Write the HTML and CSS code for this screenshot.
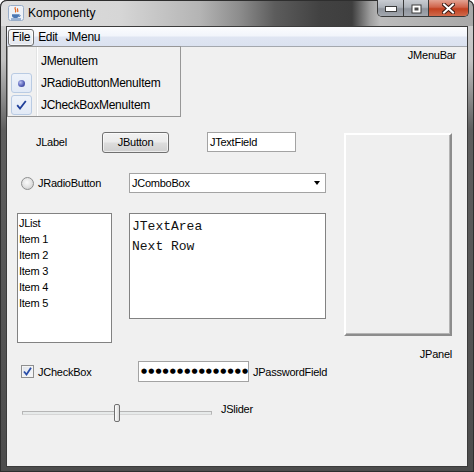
FILE: index.html
```html
<!DOCTYPE html>
<html>
<head>
<meta charset="utf-8">
<link rel="stylesheet" href="styles.css">
</head>
<body>
<div class="window">
  <div class="titlebar">
    <svg class="app-icon" width="16" height="16" viewBox="0 0 16 16">
      <rect x="0.5" y="0.5" width="15" height="15" rx="2" fill="#eef2f8" stroke="#9aaec8"/>
      <path d="M7.5 2.2c-2 1.8 1.8 2.6 -0.2 5.2M9.8 3.4c-1.2 1.2 1 1.8 -0.3 3.6" stroke="#e2641c" stroke-width="1.2" fill="none"/>
      <path d="M4 9.2h7v1.2c0 1.8-1.6 2.6-3.5 2.6S4 12.2 4 10.4z" fill="#4b77b4"/>
      <path d="M11 9.8c1.6 0 1.6 1.8 0 1.8" stroke="#4b77b4" fill="none"/>
      <path d="M3 14h10" stroke="#4b77b4" stroke-width="1"/>
    </svg>
    <span class="title">Komponenty</span>
    <div class="controls">
      <div class="ctl min">
        <svg width="12" height="6" viewBox="0 0 12 6"><rect x="0.5" y="0.5" width="11" height="5" fill="#fff" stroke="#3c3c3c"/></svg>
      </div>
      <div class="ctl max">
        <svg width="11" height="10" viewBox="0 0 11 10"><rect x="0.5" y="0.5" width="10" height="9" fill="#3c3c3c"/><rect x="1.5" y="1.5" width="8" height="7" fill="#fff"/><rect x="3.5" y="3.5" width="4" height="3" fill="#4a4a4a"/></svg>
      </div>
      <div class="ctl close">
        <svg width="13" height="11" viewBox="0 0 13 11"><path d="M2 1.5l9 8M11 1.5l-9 8" stroke="#3a1a14" stroke-width="4" stroke-linecap="square"/><path d="M2 1.5l9 8M11 1.5l-9 8" stroke="#fff" stroke-width="2" stroke-linecap="square"/></svg>
      </div>
    </div>
  </div>
  <div class="client">
    <div class="menubar">
      <span class="menu active">File</span>
      <span class="menu">Edit</span>
      <span class="menu">JMenu</span>
    </div>
    <div class="main">
      <div class="caption caption-bar">JMenuBar</div>
      <div class="upper">
        <div class="left">
          <div class="row1">
            <span class="jlabel">JLabel</span>
            <div class="button">JButton</div>
            <div class="field textfield">JTextField</div>
          </div>
          <div class="row2">
            <div class="radio-group"><span class="radio"></span><span>JRadioButton</span></div>
            <div class="field combo"><span>JComboBox</span><span class="arrow"></span></div>
          </div>
          <div class="row3">
            <div class="list">
              <div>JList</div>
              <div>Item 1</div>
              <div>Item 2</div>
              <div>Item 3</div>
              <div>Item 4</div>
              <div>Item 5</div>
            </div>
            <div class="textarea">
              <div>JTextArea</div>
              <div>Next Row</div>
            </div>
          </div>
        </div>
        <div class="panel"></div>
      </div>
      <div class="caption caption-panel">JPanel</div>
      <div class="row4">
        <div class="check-group">
          <span class="checkbox"><svg width="9" height="9" viewBox="0 0 9 9"><path d="M1 4.5l2.5 3L8 0.8" stroke="#2a4ea8" stroke-width="1.8" fill="none"/></svg></span>
          <span>JCheckBox</span>
        </div>
        <div class="field password">●●●●●●●●●●●●●●●</div>
        <span class="pw-label">JPasswordField</span>
      </div>
      <div class="row5">
        <div class="slider"><span class="track"></span><span class="thumb"></span></div>
        <span class="slider-label">JSlider</span>
      </div>
    </div>
    <div class="popup">
      <div class="item"><span class="mark"></span><span>JMenuItem</span></div>
      <div class="item"><span class="mark on"><span class="dot"></span></span><span>JRadioButtonMenuItem</span></div>
      <div class="item"><span class="mark on"><svg width="11" height="10" viewBox="0 0 11 10"><path d="M1.2 5.2l2.8 3.3L9.8 1" stroke="#1f3f9a" stroke-width="1.8" fill="none"/></svg></span><span>JCheckBoxMenuItem</span></div>
    </div>
  </div>
</div>
</body>
</html>
```
FILE: styles.css
```css
* { box-sizing: border-box; }
html, body { margin: 0; padding: 0; }
body {
  width: 474px;
  height: 472px;
  background: #fff;
  font-family: "Liberation Sans", Arial, sans-serif;
  font-size: 11px;
  letter-spacing: -0.25px;
  color: #000;
  overflow: hidden;
}
.window {
  width: 474px;
  height: 472px;
  display: flex;
  flex-direction: column;
  padding: 0 6px 5px;
  border-radius: 7px 7px 0 0;
  background: linear-gradient(to bottom, #d2d2d2 0, #c2c2c2 60px, #5e5e5e 130px, #4c4c4c 100%);
  box-shadow: inset 0 0 0 1px #2e2e2e;
}
.titlebar {
  height: 26px;
  flex: none;
  margin: 0 -6px;
  padding: 0 5px 0 8px;
  display: flex;
  align-items: flex-start;
  border-radius: 7px 7px 0 0;
  background: linear-gradient(to right, #dedede 0, #d6d6d6 120px, #b4b4b4 200px, #8c8c8c 240px, #5c5c5c 275px, #424242 320px, #3e3e3e 352px, #9c9c9c 370px, #bcbcbc 380px, #a8a8a8 474px);
  box-shadow: inset 0 1px 0 #2e2e2e, inset 1px 0 0 #2e2e2e, inset -1px 0 0 #2e2e2e;
}
.app-icon { margin-top: 5px; flex: none; }
.title {
  margin-left: 4px;
  line-height: 26px;
  font-size: 12px;
  letter-spacing: 0;
}
.controls {
  margin-left: auto;
  display: flex;
  height: 17px;
  border: 1px solid #3a3a3a;
  border-top: none;
  border-radius: 0 0 5px 5px;
  overflow: hidden;
}
.ctl {
  height: 16px;
  display: flex;
  align-items: center;
  justify-content: center;
}
.min, .max {
  width: 25px;
  background: linear-gradient(to bottom, #c9ccd2 0, #aeb3ba 45%, #8f949c 55%, #a2a7ae 100%);
}
.min { align-items: flex-end; padding-bottom: 4px; }
.max { border-left: 1px solid #3a3a3a; padding-top: 1px; }
.close {
  width: 40px;
  border-left: 1px solid #3a3a3a;
  background: linear-gradient(to bottom, #e3a393 0, #d0644b 45%, #c2401f 55%, #d06a4c 100%);
}
.client {
  flex: 1;
  position: relative;
  display: flex;
  flex-direction: column;
  border: 1px solid #3b3b3b;
  background: #f0f0f0;
}
.menubar {
  height: 20px;
  flex: none;
  display: flex;
  align-items: flex-start;
  padding: 2px 0 0 1px;
  border-bottom: 1px solid #a4a8ae;
  background: linear-gradient(to bottom, #fbfcfe 0, #f2f5fb 45%, #dfe5f2 55%, #dbe2f0 100%);
}
.menu {
  height: 17px;
  line-height: 15px;
  padding: 0 3px;
  border: 1px solid transparent;
  border-radius: 3px;
  font-size: 12px;
  letter-spacing: -0.3px;
}
.menu.active {
  border-color: #6e6e6e;
  background: linear-gradient(to bottom, #f7f7f7, #e2e6ee);
  box-shadow: inset 0 0 0 1px rgba(255,255,255,0.7);
}
.main {
  display: flex;
  flex-direction: column;
  padding-left: 10px;
}
.caption {
  text-align: right;
}
.caption-bar {
  line-height: 16px;
  padding-right: 11px;
}
.upper {
  display: flex;
  align-items: flex-start;
  margin-top: 69px;
}
.left {
  width: 309px;
  display: flex;
  flex-direction: column;
}
.row1 {
  display: flex;
  align-items: flex-start;
  height: 21px;
}
.jlabel {
  margin-left: 19px;
  width: 66px;
  line-height: 21px;
}
.button {
  width: 67px;
  height: 21px;
  line-height: 19px;
  text-align: center;
  border: 1px solid #707070;
  border-radius: 3px;
  background: linear-gradient(to bottom, #f2f2f2 0, #ebebeb 48%, #dddddd 52%, #cfcfcf 100%);
  box-shadow: inset 0 0 0 1px rgba(255,255,255,0.6);
}
.field {
  border: 1px solid #a3a3a3;
  background: #fff;
}
.textfield {
  margin-left: 38px;
  width: 89px;
  height: 20px;
  line-height: 18px;
  padding-left: 2px;
}
.row2 {
  margin-top: 20px;
  height: 20px;
  display: flex;
  align-items: center;
  justify-content: space-between;
}
.radio-group {
  display: flex;
  align-items: center;
  gap: 4px;
  padding-left: 4px;
}
.radio {
  width: 13px;
  height: 13px;
  border-radius: 50%;
  border: 1px solid #8e8f8f;
  background: radial-gradient(circle at 45% 40%, #fafafa 0, #e6e6e6 45%, #c4c4c4 100%);
}
.combo {
  width: 197px;
  height: 20px;
  display: flex;
  align-items: center;
  padding-left: 2px;
}
.arrow {
  margin-left: auto;
  margin-right: 5px;
  width: 0;
  height: 0;
  border-left: 3.5px solid transparent;
  border-right: 3.5px solid transparent;
  border-top: 4px solid #000;
}
.row3 {
  margin-top: 20px;
  display: flex;
  align-items: flex-start;
  justify-content: space-between;
}
.list {
  width: 95px;
  height: 130px;
  border: 1px solid #828282;
  background: #fff;
  padding: 1px 0 0 1px;
  line-height: 16px;
}
.textarea {
  width: 197px;
  height: 106px;
  border: 1px solid #828282;
  background: #fff;
  padding: 3px 0 0 2px;
  font-family: "Liberation Mono", "Courier New", monospace;
  font-size: 13px;
  letter-spacing: 0;
  line-height: 20px;
  color: #111;
}
.panel {
  margin-left: 18px;
  margin-top: 1px;
  width: 108px;
  height: 203px;
  border-style: solid;
  border-width: 2px 2px 2px 2px;
  border-color: #fff #8c8c8c #8c8c8c #fff;
  box-shadow: inset -1px -1px 0 #b4b4b4;
  background: #efefef;
}
.caption-panel {
  margin-top: 4px;
  line-height: 14px;
  padding-right: 15px;
}
.row4 {
  display: flex;
  align-items: center;
  height: 21px;
}
.check-group {
  width: 121px;
  display: flex;
  align-items: center;
  gap: 4px;
  padding-left: 4px;
}
.checkbox {
  width: 13px;
  height: 13px;
  border: 1px solid #8e8f8f;
  background: linear-gradient(135deg, #dfe3ea, #f8f9fb);
  box-shadow: inset 0 0 0 1px #f4f4f4;
  display: flex;
  align-items: center;
  justify-content: center;
}
.password {
  width: 111px;
  height: 21px;
  line-height: 19px;
  padding-left: 2px;
  font-family: "DejaVu Sans", sans-serif;
  font-size: 7px;
  letter-spacing: 1.1px;
  overflow: hidden;
  white-space: nowrap;
}
.pw-label { margin-left: 4px; }
.row5 {
  margin-top: 22px;
  display: flex;
  align-items: flex-start;
  height: 18px;
}
.slider {
  position: relative;
  width: 190px;
  height: 18px;
  margin-left: 5px;
}
.track {
  position: absolute;
  left: 0;
  right: 0;
  top: 7px;
  height: 4px;
  border: 1px solid #b5b5b5;
  border-bottom-color: #d6d6d6;
  background: #e7eaea;
}
.thumb {
  position: absolute;
  left: 92px;
  top: 0;
  width: 6px;
  height: 18px;
  border: 1px solid #707070;
  border-radius: 2px;
  background: linear-gradient(to right, #fdfdfd, #dadada);
}
.slider-label {
  margin-left: 9px;
  margin-top: -3px;
  line-height: 16px;
}
.popup {
  position: absolute;
  left: 0;
  top: 19px;
  width: 174px;
  height: 71px;
  border: 1px solid #979797;
  padding-top: 3px;
  background: linear-gradient(to right, transparent 28px, #e2e3e3 28px, #e2e3e3 29px, #fff 29px, #fff 30px, transparent 30px), #f0f0f0;
  font-size: 12px;
  letter-spacing: -0.3px;
}
.item {
  height: 22px;
  display: flex;
  align-items: center;
  padding-left: 3px;
}
.mark {
  width: 21px;
  height: 20px;
  margin-right: 9px;
  border-radius: 3px;
  display: flex;
  align-items: center;
  justify-content: center;
}
.mark.on {
  border: 1px solid #b9cbe3;
  background: linear-gradient(to bottom, #eef3fa, #e2eaf6);
}
.dot {
  width: 7px;
  height: 7px;
  border-radius: 50%;
  background: radial-gradient(circle at 35% 35%, #b8c0f0 0, #5560b8 55%, #2a3080 100%);
}
```
